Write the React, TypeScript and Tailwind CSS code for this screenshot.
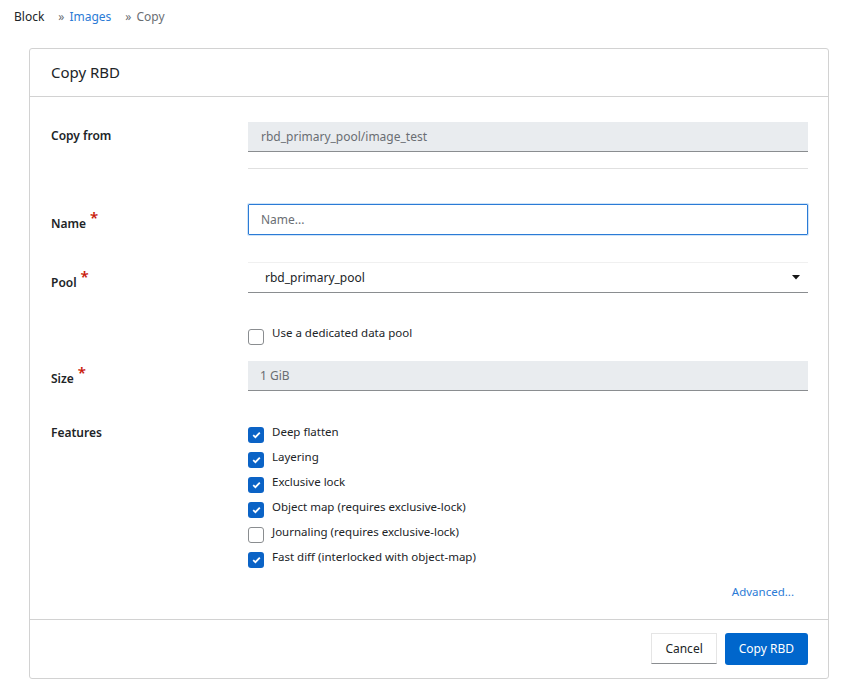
import React from "react";

const features = [
  { label: "Deep flatten", checked: true },
  { label: "Layering", checked: true },
  { label: "Exclusive lock", checked: true },
  { label: "Object map (requires exclusive-lock)", checked: true },
  { label: "Journaling (requires exclusive-lock)", checked: false },
  { label: "Fast diff (interlocked with object-map)", checked: true },
];

const Check = ({ checked }: { checked: boolean }) =>
  checked ? (
    <span className="flex h-4 w-4 shrink-0 items-center justify-center rounded-[3px] bg-[#0b63c6]">
      <svg width="9" height="8" viewBox="0 0 9 8">
        <path d="M1.2 4.2 L3.4 6.2 L7.8 1.6" fill="none" stroke="#fff" strokeWidth="1.8" />
      </svg>
    </span>
  ) : (
    <span className="block h-4 w-4 shrink-0 rounded-[3px] border border-[#8a8d90] bg-white" />
  );

const Req = () => <span className="ml-1 text-[15px] leading-none text-[#c9190b] relative -top-[5px]">*</span>;

const App: React.FC = () => {
  return (
    <div className="min-h-[687px] bg-white text-[12px] text-[#212427] font-['Noto_Sans',sans-serif]">
      <div className="flex items-center px-[14px] pt-[7px] h-[26px] text-[12px]">
        <span className="text-[#212427]">Block</span>
        <span className="ml-[14px] mr-[5px] text-[12px] text-[#6a6e73]">»</span>
        <span className="text-[#2b7bd6]">Images</span>
        <span className="ml-[14px] mr-[5px] text-[12px] text-[#6a6e73]">»</span>
        <span className="text-[#6a6e73]">Copy</span>
      </div>

      <div className="mx-[29px] mt-[22px] rounded-[3px] border border-[#d2d2d2] w-[800px]">
        <div className="h-[48px] flex items-center px-[21px] border-b border-[#d2d2d2] text-[15px]">Copy RBD</div>

        <div className="pl-[21px] pr-[20px] pt-[25px]">
          <div className="flex">
            <div className="w-[197px] pt-[5px] font-semibold text-[12px]">Copy from</div>
            <div className="flex-1">
              <div className="h-[30px] bg-[#e9ecef] border-b border-[#8a8d90] flex items-center px-[13px] text-[#6a6e73]">rbd_primary_pool/image_test</div>
              <div className="mt-[16px] border-t border-[#e0e0e0]" />
            </div>
          </div>

          <div className="flex mt-[35px] items-start">
            <div className="w-[197px] pt-[11px] font-semibold text-[12px] flex items-start">Name<Req /></div>
            <div className="flex-1 h-[31px] border border-[#2b7bd6] rounded-[1px] shadow-[0_0_0_1px_#d0e4f8] flex items-center px-[12px] text-[#6a6e73]">Name...</div>
          </div>

          <div className="flex mt-[27px] items-start">
            <div className="w-[197px] pt-[12px] font-semibold text-[12px] flex items-start">Pool<Req /></div>
            <div className="flex-1 h-[31px] border-t border-[#f0f0f0] border-b border-b-[#8a8d90] flex items-center justify-between pl-[17px] pr-[8px] text-[#212427]">
              <span>rbd_primary_pool</span>
              <svg width="8" height="5" viewBox="0 0 8 5"><path d="M0 0 L8 0 L4 4.5 Z" fill="#151515" /></svg>
            </div>
          </div>

          <div className="flex mt-[34px] h-[16px]">
            <div className="w-[197px]" />
            <label className="flex items-start gap-[8px] text-[11.5px]">
              <span className="flex mt-[2px]"><Check checked={false} /></span>
              <span className="-mt-[3px]">Use a dedicated data pool</span>
            </label>
          </div>

          <div className="flex mt-[18px] items-start">
            <div className="w-[197px] pt-[9px] font-semibold text-[12px] flex items-start">Size<Req /></div>
            <div className="flex-1 h-[30px] bg-[#e9ecef] border-b border-[#8a8d90] flex items-center px-[12px] text-[#6a6e73]">1 GiB</div>
          </div>

          <div className="flex mt-[35px]">
            <div className="w-[197px] -mt-[2px] font-semibold text-[12px]">Features</div>
            <div className="flex flex-col gap-[9px] pt-[1px]">
              {features.map((f) => (
                <label key={f.label} className="flex items-start gap-[8px] text-[11.5px] leading-[16px]">
                  <Check checked={f.checked} />
                  <span className="-mt-[3px]">{f.label}</span>
                </label>
              ))}
            </div>
          </div>

          <div className="flex justify-end mt-[15px] pr-[14px] pb-[19px]">
            <span className="text-[11.5px] text-[#2b7bd6]">Advanced...</span>
          </div>
        </div>

        <div className="border-t border-[#d2d2d2] flex justify-end gap-[8px] px-[20px] pt-[13px] pb-[13px]">
          <button className="h-[31px] px-[13px] border border-[#e5e5e5] border-b-[#8a8d90] bg-white text-[12px] text-[#212427]">Cancel</button>
          <button className="h-[32px] px-[14px] rounded-[3px] bg-[#0066cc] text-[12px] text-white">Copy RBD</button>
        </div>
      </div>
    </div>
  );
};

export default App;
